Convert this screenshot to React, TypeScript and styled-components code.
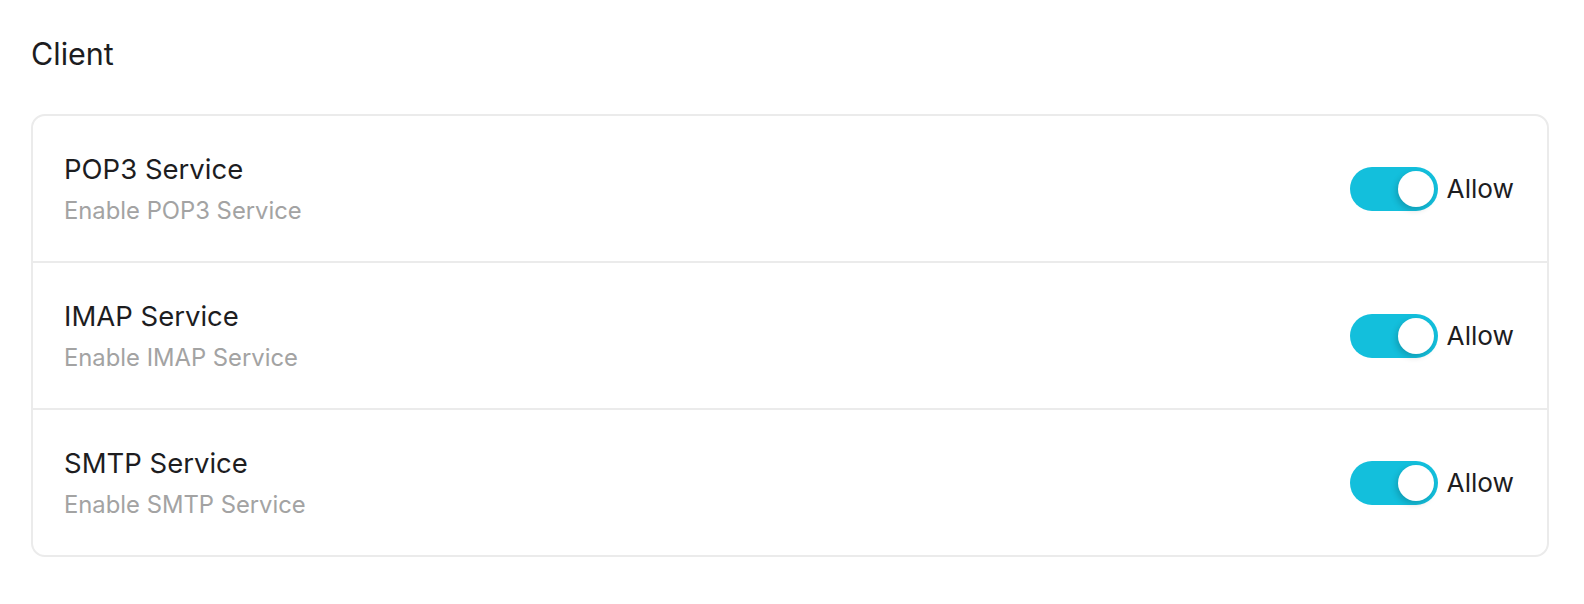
import React from 'react';
import styled, { createGlobalStyle } from 'styled-components';

const GlobalStyle = createGlobalStyle`
    html, body {
        margin: 0;
        padding: 0;
        background: #ffffff;
    }
    body {
        font-family: Inter, 'Noto Sans', sans-serif;
        -webkit-font-smoothing: antialiased;
    }
`;

const Page = styled.div`
    padding: 30px 35px 46px 31px;
`;

const Title = styled.h2`
    margin: 0 0 36px 0;
    font-size: 30.5px;
    font-weight: 400;
    line-height: 48px;
    color: #1d1d1f;
`;

const Card = styled.div`
    border: 2px solid #ebebeb;
    border-radius: 14px;
    background: #ffffff;
    overflow: hidden;
`;

const Row = styled.div<{ $last?: boolean }>`
    display: flex;
    align-items: center;
    justify-content: space-between;
    height: 145px;
    padding: 0 33px 0 31px;
    border-bottom: ${({ $last }) => ($last ? 'none' : '2px solid #ebebeb')};
`;

const TextBlock = styled.div`
    display: flex;
    flex-direction: column;
    gap: 9px;
`;

const RowTitle = styled.div`
    font-size: 27.5px;
    line-height: 36px;
    color: #1d1d1f;
`;

const RowHint = styled.div`
    font-size: 23.8px;
    line-height: 30px;
    color: #a3a3a3;
`;

const Control = styled.label`
    display: flex;
    align-items: center;
    gap: 9px;
    font-size: 26.2px;
    color: #1d1d1f;
`;

const Track = styled.span<{ $on: boolean }>`
    position: relative;
    display: inline-block;
    width: 88px;
    height: 44px;
    border-radius: 22px;
    background: ${({ $on }) => ($on ? '#13bfdc' : '#d8d8d8')};
`;

const Knob = styled.span<{ $on: boolean }>`
    position: absolute;
    top: 4px;
    left: ${({ $on }) => ($on ? '48px' : '4px')};
    width: 36px;
    height: 36px;
    border-radius: 50%;
    background: #ffffff;
    box-shadow: -2px 3px 6px rgba(0, 0, 0, 0.18);
`;

const services = [
    { name: 'POP3 Service', hint: 'Enable POP3 Service' },
    { name: 'IMAP Service', hint: 'Enable IMAP Service' },
    { name: 'SMTP Service', hint: 'Enable SMTP Service' },
];

const App = (): JSX.Element => (
    <>
        <GlobalStyle />
        <Page>
            <Title>Client</Title>
            <Card>
                {services.map((s, i) => (
                    <Row key={s.name} $last={i === services.length - 1}>
                        <TextBlock>
                            <RowTitle>{s.name}</RowTitle>
                            <RowHint>{s.hint}</RowHint>
                        </TextBlock>
                        <Control>
                            <Track $on>
                                <Knob $on />
                            </Track>
                            Allow
                        </Control>
                    </Row>
                ))}
            </Card>
        </Page>
    </>
);

export default App;
